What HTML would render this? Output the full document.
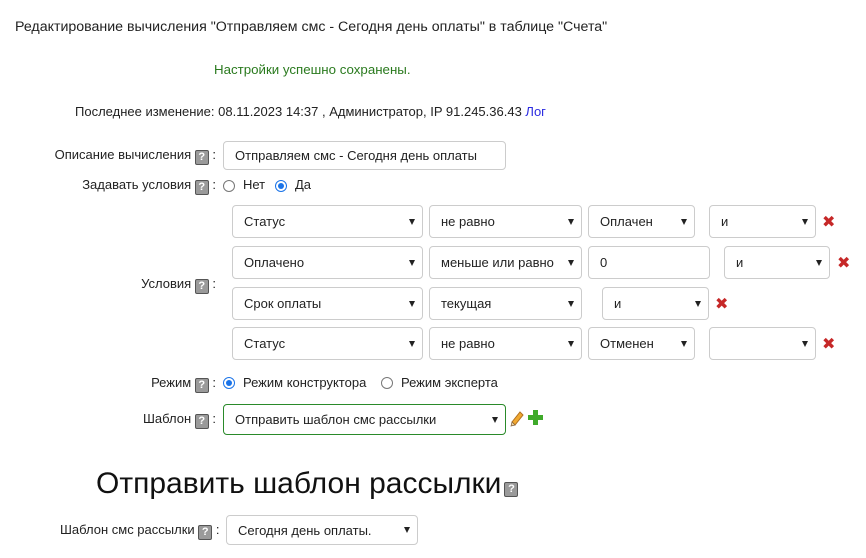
<!DOCTYPE html>
<html><head><meta charset="utf-8"><style>
body{margin:0;width:866px;height:558px;background:#fff;font-family:"Liberation Sans","DejaVu Sans",sans-serif;font-size:13px;color:#222;position:relative;overflow:hidden}
.a{position:absolute;white-space:nowrap}
.sel,.inp{position:absolute;box-sizing:border-box;border:1px solid #ccc;border-radius:4px;background:#fff;padding-left:11px;display:flex;align-items:center;font-size:13px;color:#222}
.sel:after{content:"";position:absolute;right:7px;top:50%;margin-top:-3px;border-left:3.5px solid transparent;border-right:3.5px solid transparent;border-top:6px solid #222}
.h{display:inline-block;width:12px;height:13px;background:#9a9a9a;border:1px solid #555;border-radius:2px;color:#fff;font-weight:bold;font-size:11px;line-height:13px;text-align:center;vertical-align:-1px;box-sizing:content-box}
.lab{position:absolute;text-align:right;white-space:nowrap}
.r{position:absolute;width:12px;height:12px;border:1px solid #777;border-radius:50%;box-sizing:border-box}
.r.on{border:1.5px solid #1a73e8}
.r.on:after{content:"";position:absolute;left:1.5px;top:1.5px;width:6px;height:6px;border-radius:50%;background:#1a73e8}
.x{position:absolute;color:#c62828;font-size:16px;font-weight:bold;line-height:1}
</style></head><body>
<div class="a" style="left:15px;top:19px;font-size:14.2px">Редактирование вычисления "Отправляем смс - Сегодня день оплаты" в таблице "Счета"</div>
<div class="a" style="left:214px;top:62px;color:#2a7a1e;font-size:13.3px">Настройки успешно сохранены.</div>
<div class="a" style="left:75px;top:104px">Последнее изменение: 08.11.2023 14:37 , Администратор, IP 91.245.36.43 <span style="color:#2a2ae0">Лог</span></div>

<div class="lab" style="right:650px;top:147px">Описание вычисления <span class="h">?</span> :</div>
<div class="inp" style="left:223px;top:141px;width:283px;height:29px">Отправляем смс - Сегодня день оплаты</div>

<div class="lab" style="right:650px;top:177px">Задавать условия <span class="h">?</span> :</div>
<div class="r" style="left:223px;top:180px"></div><div class="a" style="left:243px;top:177px">Нет</div>
<div class="r on" style="left:275px;top:180px"></div><div class="a" style="left:295px;top:177px">Да</div>

<div class="lab" style="right:650px;top:276px">Условия <span class="h">?</span> :</div>

<div class="sel" style="left:232px;top:205px;width:191px;height:33px">Статус</div>
<div class="sel" style="left:429px;top:205px;width:153px;height:33px">не равно</div>
<div class="sel" style="left:588px;top:205px;width:107px;height:33px">Оплачен</div>
<div class="sel" style="left:709px;top:205px;width:107px;height:33px">и</div>
<div class="x" style="left:822px;top:215px">✖</div>

<div class="sel" style="left:232px;top:246px;width:191px;height:33px">Оплачено</div>
<div class="sel" style="left:429px;top:246px;width:153px;height:33px">меньше или равно</div>
<div class="inp" style="left:588px;top:246px;width:122px;height:33px">0</div>
<div class="sel" style="left:724px;top:246px;width:106px;height:33px">и</div>
<div class="x" style="left:837px;top:256px">✖</div>

<div class="sel" style="left:232px;top:287px;width:191px;height:33px">Срок оплаты</div>
<div class="sel" style="left:429px;top:287px;width:153px;height:33px">текущая</div>
<div class="sel" style="left:602px;top:287px;width:107px;height:33px">и</div>
<div class="x" style="left:715px;top:297px">✖</div>

<div class="sel" style="left:232px;top:327px;width:191px;height:33px">Статус</div>
<div class="sel" style="left:429px;top:327px;width:153px;height:33px">не равно</div>
<div class="sel" style="left:588px;top:327px;width:107px;height:33px">Отменен</div>
<div class="sel" style="left:709px;top:327px;width:107px;height:33px"></div>
<div class="x" style="left:822px;top:337px">✖</div>

<div class="lab" style="right:650px;top:375px">Режим <span class="h">?</span> :</div>
<div class="r on" style="left:223px;top:377px"></div><div class="a" style="left:243px;top:375px">Режим конструктора</div>
<div class="r" style="left:381px;top:377px"></div><div class="a" style="left:401px;top:375px">Режим эксперта</div>

<div class="lab" style="right:650px;top:411px">Шаблон <span class="h">?</span> :</div>
<div class="sel" style="left:223px;top:404px;width:283px;height:31px;border-color:#2a8a2a">Отправить шаблон смс рассылки</div>
<svg class="a" style="left:509px;top:409px" width="16" height="18" viewBox="0 0 16 18"><path d="M3 13 L11 3 L14 6 L6 16 Z" fill="#f0a830" stroke="#b07020"/><path d="M3 13 L2 17 L6 16 Z" fill="#f3d9a0" stroke="#806040" stroke-width=".7"/></svg>
<svg class="a" style="left:528px;top:410px" width="15" height="15" viewBox="0 0 15 15"><path d="M5 0h5v5h5v5h-5v5h-5v-5h-5v-5h5z" fill="#3faa2a"/></svg>

<div class="a" style="left:96px;top:467px;font-size:30px;color:#111">Отправить шаблон рассылки<span class="h" style="margin-left:3px;vertical-align:1px">?</span></div>

<div class="lab" style="left:60px;top:522px">Шаблон смс рассылки <span class="h">?</span> :</div>
<div class="sel" style="left:226px;top:515px;width:192px;height:30px">Сегодня день оплаты.</div>
</body></html>
